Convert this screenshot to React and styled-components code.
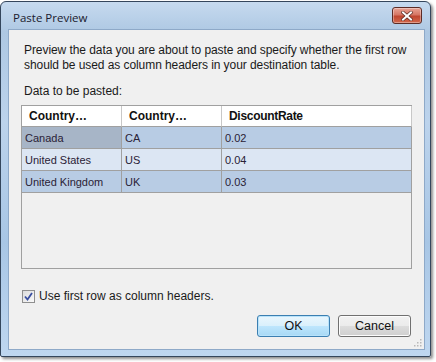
import React from "react";
import styled, { createGlobalStyle } from "styled-components";

const Global = createGlobalStyle`
  html, body { margin: 0; padding: 0; background: #ffffff; }
  body { width: 436px; height: 362px; overflow: hidden; }
`;

const Page = styled.div`
  padding: 1px 0 0 0;
`;

const Window = styled.div`
  width: 431px;
  height: 356px;
  box-sizing: border-box;
  border: 1px solid #34465c;
  border-radius: 6px 6px 2px 2px;
  background: linear-gradient(180deg, #c6daef 0px, #aec8e3 30px, #bcd3ec 120px, #a8c6e5 240px, #bfd7f0 356px);
  box-shadow: 2px 2px 3px rgba(0, 0, 0, 0.45);
  padding: 0 5px 6px 7px;
  display: flex;
  flex-direction: column;
`;

const TitleBar = styled.div`
  height: 27px;
  display: flex;
  align-items: center;
  justify-content: space-between;
  padding: 0 3px 0 5px;
`;

const Title = styled.span`
  font-family: "Open Sans", "Liberation Sans", sans-serif;
  font-size: 11.5px;
  color: #1b1b2e;
  margin-top: 3px;
`;

const CloseButton = styled.div`
  width: 28px;
  height: 15px;
  border: 1px solid #5c2c26;
  border-radius: 3px;
  background: linear-gradient(180deg, #e8a395 0%, #d67664 45%, #c04630 55%, #d2684c 100%);
  display: flex;
  align-items: center;
  justify-content: center;
  box-shadow: inset 0 0 0 1px rgba(255, 255, 255, 0.35);
`;

const Client = styled.div`
  flex: 1;
  background: #f0f0f0;
  border: 1px solid #8ea9c8;
  padding: 13px 12px 0 12px;
  display: flex;
  flex-direction: column;
  position: relative;
  font-family: "Liberation Sans", Arial, sans-serif;
  font-size: 12px;
  color: #1a1a1a;
`;

const Paragraph = styled.p`
  margin: 0 0 0 3px;
  line-height: 15px;
  letter-spacing: -0.07px;
`;

const Label = styled.div`
  margin: 11px 0 0 3px;
  line-height: 15px;
`;

const GridBox = styled.div`
  margin-top: 6px;
  height: 164px;
  border: 1px solid #a0a0a0;
  background: #f0f0f0;
  box-sizing: border-box;
`;

const Grid = styled.div`
  display: grid;
  grid-template-columns: 100px 100px 190px;
  font-family: "Liberation Sans", Arial, sans-serif;
  font-size: 11px;
`;

const HeaderCell = styled.div`
  height: 20px;
  background: #ffffff;
  border-right: 1px solid #c8c8c8;
  border-bottom: 1px solid #a0a0a0;
  font-weight: bold;
  font-size: 12px;
  color: #111;
  display: flex;
  align-items: center;
  padding-left: 7px;
  letter-spacing: ${(p) => (p.$tight ? "-0.3px" : "0")};
  &:last-child { border-right: 2px solid #ffffff; }
`;

const Cell = styled.div`
  height: 21px;
  background: ${(p) => (p.$current ? "#a7b5c7" : p.$alt ? "#dce6f3" : "#b8cce4")};
  border-right: 1px solid #a0a0a0;
  border-bottom: 1px solid #a0a0a0;
  color: #2a2236;
  display: flex;
  align-items: center;
  padding-left: 3px;
`;

const CheckRow = styled.label`
  display: flex;
  align-items: center;
  gap: 4px;
  margin-top: 20px;
  line-height: 15px;
`;

const CheckBox = styled.span`
  width: 11px;
  height: 11px;
  border: 1px solid #8f8f8f;
  background: linear-gradient(135deg, #dcdcdc, #fafafa);
  display: flex;
  align-items: center;
  justify-content: center;
  margin-left: 1px;
`;

const Buttons = styled.div`
  display: flex;
  justify-content: flex-end;
  gap: 8px;
  margin-top: 11px;
  padding-right: 1px;
`;

const Button = styled.button`
  width: 73px;
  height: 22px;
  box-sizing: border-box;
  border: 1px solid ${(p) => (p.$default ? "#3c7fb1" : "#707070")};
  border-radius: 3px;
  background: ${(p) =>
    p.$default
      ? "linear-gradient(180deg, #eaf6fd 0%, #d9f0fc 50%, #bee6fd 50%, #a7d9f5 100%)"
      : "linear-gradient(180deg, #f2f2f2 0%, #ebebeb 50%, #dddddd 50%, #cfcfcf 100%)"};
  box-shadow: inset 0 0 0 1px ${(p) => (p.$default ? "#b8e3fb" : "#fcfcfc")};
  font-family: "Liberation Sans", Arial, sans-serif;
  font-size: 12.5px;
  color: #111;
  padding: 0;
`;

const Grip = styled.svg`
  position: absolute;
  right: 2px;
  bottom: 2px;
`;

const rows = [
  ["Canada", "CA", "0.02"],
  ["United States", "US", "0.04"],
  ["United Kingdom", "UK", "0.03"],
];

export default function App() {
  return (
    <Page>
      <Global />
      <Window>
        <TitleBar>
          <Title>Paste Preview</Title>
          <CloseButton>
            <svg width="12" height="10" viewBox="0 0 12 10">
              <path d="M2 1.5 L10 8.5 M10 1.5 L2 8.5" stroke="#5a2a22" strokeWidth="3.4" strokeLinecap="square" />
              <path d="M2 1.5 L10 8.5 M10 1.5 L2 8.5" stroke="#ffffff" strokeWidth="2" strokeLinecap="square" />
            </svg>
          </CloseButton>
        </TitleBar>
        <Client>
          <Paragraph>
            Preview the data you are about to paste and specify whether the first row
            <br />
            should be used as column headers in your destination table.
          </Paragraph>
          <Label>Data to be pasted:</Label>
          <GridBox>
            <Grid>
              <HeaderCell>Country…</HeaderCell>
              <HeaderCell>Country…</HeaderCell>
              <HeaderCell $tight>DiscountRate</HeaderCell>
              {rows.map((r, i) =>
                r.map((v, j) => (
                  <Cell key={`${i}-${j}`} $alt={i === 1} $current={i === 0 && j === 0}>
                    {v}
                  </Cell>
                ))
              )}
            </Grid>
          </GridBox>
          <CheckRow>
            <CheckBox>
              <svg width="9" height="9" viewBox="0 0 9 9">
                <path d="M1 4.5 L3.5 7.5 L8 1" stroke="#3a4fa0" strokeWidth="1.8" fill="none" />
              </svg>
            </CheckBox>
            Use first row as column headers.
          </CheckRow>
          <Buttons>
            <Button $default>OK</Button>
            <Button>Cancel</Button>
          </Buttons>
          <Grip width="10" height="10" viewBox="0 0 10 10">
            {[[8, 0], [8, 3], [5, 3], [8, 6], [5, 6], [2, 6]].map(([x, y], k) => (
              <rect key={k} x={x} y={y + 2} width="1.5" height="1.5" fill="#b8b8b8" />
            ))}
          </Grip>
        </Client>
      </Window>
    </Page>
  );
}
